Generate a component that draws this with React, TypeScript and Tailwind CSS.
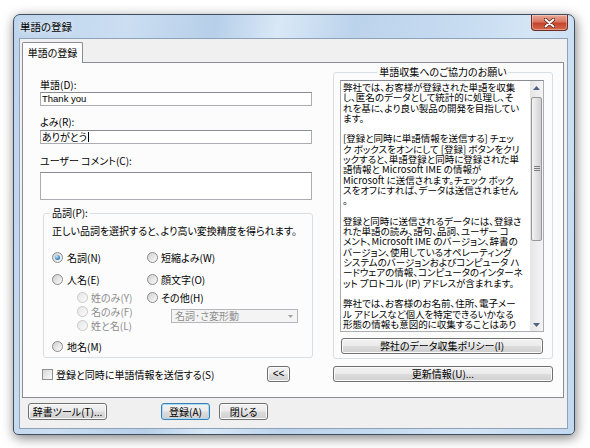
import React from "react";

const btnBase =
  "flex items-center justify-center rounded-[3px] border text-[10px] leading-none text-black bg-[linear-gradient(#f2f2f2_0%,#ebebeb_48%,#dddddd_52%,#cfcfcf_100%)]";

function Btn({
  className,
  children,
  def,
}: {
  className: string;
  children: React.ReactNode;
  def?: boolean;
}) {
  return (
    <div
      className={
        btnBase +
        " " +
        (def
          ? "border-[#3c7fb1] shadow-[inset_0_0_0_1px_#a8dcf7]"
          : "border-[#707070] shadow-[inset_0_0_0_1px_#fbfbfb]") +
        " " +
        className
      }
    >
      {children}
    </div>
  );
}

function Radio({ checked, disabled }: { checked?: boolean; disabled?: boolean }) {
  return (
    <span
      className={
        "flex h-[11px] w-[11px] shrink-0 items-center justify-center rounded-full border " +
        (disabled
          ? "border-[#c9c9c9] bg-[linear-gradient(135deg,#e6e6e6,#fbfbfb)]"
          : "border-[#8b8b8b] bg-[linear-gradient(135deg,#cfcfcf,#fcfcfc)]")
      }
    >
      {checked && (
        <span className="h-[5px] w-[5px] rounded-full bg-[radial-gradient(circle_at_35%_30%,#b9ecff,#2a78b8_70%,#1a5a95)]" />
      )}
    </span>
  );
}

function RadioRow({
  label,
  checked,
  disabled,
  gap = "gap-[4px]",
}: {
  label: string;
  checked?: boolean;
  disabled?: boolean;
  gap?: string;
}) {
  return (
    <div className={"flex h-[12px] items-center " + gap}>
      <Radio checked={checked} disabled={disabled} />
      <span className={"whitespace-nowrap " + (disabled ? "text-[#8d8d8d]" : "text-black")}>{label}</span>
    </div>
  );
}

const lines = [
  "弊社では、お客様が登録された単語を収集",
  "し、匿名のデータとして統計的に処理し、そ",
  "れを基に、より良い製品の開発を目指してい",
  "ます。",
  "",
  "[登録と同時に単語情報を送信する] チェッ",
  "ク ボックスをオンにして [登録] ボタンをクリ",
  "ックすると、単語登録と同時に登録された単",
  "語情報と Microsoft IME の情報が",
  "Microsoft に送信されます。チェック ボック",
  "スをオフにすれば、データは送信されません",
  "。",
  "",
  "登録と同時に送信されるデータには、登録さ",
  "れた単語の読み、語句、品詞、ユーザー コ",
  "メント、Microsoft IME のバージョン、辞書の",
  "バージョン、使用しているオペレーティング",
  "システムのバージョンおよびコンピュータ ハ",
  "ードウェアの情報、コンピュータのインターネ",
  "ット プロトコル (IP) アドレスが含まれます。",
  "",
  "弊社では、お客様のお名前、住所、電子メー",
  "ル アドレスなど個人を特定できるいかなる",
  "形態の情報も意図的に収集することはあり",
];

function Scrollbar() {
  return (
    <div className="flex h-full w-[13px] shrink-0 flex-col bg-[linear-gradient(90deg,#e5e5e5,#f4f4f4)]">
      <div className="flex h-[13px] items-center justify-center">
        <svg width="7" height="4" viewBox="0 0 7 4">
          <path d="M0 4 L3.5 0 L7 4 Z" fill="#4d6185" />
        </svg>
      </div>
      <div className="mx-[1px] mt-[3px] flex h-[144px] items-center justify-center rounded-[2px] border border-[#979797] bg-[linear-gradient(90deg,#f3f3f3,#e2e2e2_50%,#d1d1d1)]">
        <svg width="6" height="6" viewBox="0 0 6 6">
          <path d="M0 0.5 H6 M0 2.5 H6 M0 4.5 H6" stroke="#7a7a7a" strokeWidth="1" />
        </svg>
      </div>
      <div className="flex-1" />
      <div className="flex h-[13px] items-center justify-center">
        <svg width="7" height="4" viewBox="0 0 7 4">
          <path d="M0 0 L3.5 4 L7 0 Z" fill="#4d6185" />
        </svg>
      </div>
    </div>
  );
}

export default function App() {
  return (
    <div className="h-[448px] w-[590px] overflow-hidden bg-white pl-[13px] pt-[14px] font-['Noto_Sans_CJK_JP',sans-serif] text-[10px] text-black [font-feature-settings:'palt']">
      {/* window */}
      <div className="flex h-[421px] w-[562px] flex-col rounded-t-[7px] rounded-b-[5px] border border-[#3f4e61] bg-[linear-gradient(100deg,#bed4ec_0%,#cbdef2_18%,#b7cfe9_32%,#d9e8f6_42%,#bcd3ec_54%,#c6dbf0_70%,#d4e5f5_82%,#c2d8ef_100%)] shadow-[1px_3px_12px_rgba(0,0,0,0.5)]">
        {/* title bar */}
        <div className="flex h-[23px] shrink-0 items-start">
          <div className="ml-[6px] mt-[5px] text-[10.5px] leading-[13px] text-black [text-shadow:0_0_6px_#ffffff]">
            単語の登録
          </div>
          <div className="ml-auto mr-[6px] flex h-[16px] w-[37px] items-center justify-center rounded-b-[4px] border border-t-0 border-[#6d2a22] bg-[linear-gradient(#e9a898_0%,#d9765f_45%,#c4442c_55%,#d6684c_100%)] shadow-[inset_0_0_0_1px_rgba(255,255,255,0.35)]">
            <svg width="11" height="10" viewBox="0 0 11 10">
              <path d="M1.5 1.5 L9.5 8.5 M9.5 1.5 L1.5 8.5" stroke="#5a2015" strokeWidth="3.6" strokeLinecap="round" />
              <path d="M1.5 1.5 L9.5 8.5 M9.5 1.5 L1.5 8.5" stroke="#ffffff" strokeWidth="2" strokeLinecap="round" />
            </svg>
          </div>
        </div>
        {/* client area */}
        <div className="ml-[5px] flex h-[391px] w-[549px] flex-col border border-[#8da2b9] bg-[#f0f0f0]">
          {/* tab control */}
          <div className="ml-[2px] mt-[3px] flex w-[542px] flex-col">
            <div className="relative z-10 -mb-[1px] flex h-[21px] w-[61px] items-center justify-center rounded-t-[2px] border border-b-0 border-[#898c95] bg-[#fcfcfc] pb-[1px]">
              単語の登録
            </div>
            <div className="flex h-[336px] w-[542px] border border-[#898c95] bg-[#fcfcfc]">
              {/* left column */}
              <div className="ml-[17px] flex w-[273px] flex-col">
                <div className="mt-[16px] h-[12px] leading-[12px]">単語(D):</div>
                <div className="mt-[1px] flex h-[14px] w-[272px] items-center border border-[#abadb3] border-t-[#8a8c94] bg-white pl-[1px] font-['Liberation_Sans',sans-serif] text-[9.5px] leading-none">
                  Thank you
                </div>
                <div className="mt-[10px] h-[12px] leading-[12px]">よみ(R):</div>
                <div className="mt-[2px] flex h-[14px] w-[272px] items-center border border-[#abadb3] border-t-[#8a8c94] bg-white pl-[1px] leading-none">
                  ありがとう<span className="ml-[1px] inline-block h-[10px] w-[1px] bg-black" />
                </div>
                <div className="mt-[11px] h-[12px] leading-[12px]">ユーザー コメント(C):</div>
                <div className="mt-[5px] h-[28px] w-[272px] border border-[#abadb3] border-t-[#8a8c94] bg-white" />
                {/* group */}
                <div className="relative ml-[3px] mt-[13px] flex h-[145px] w-[270px] flex-col rounded-[3px] border border-[#d5dfe5] pl-[8px]">
                  <span className="absolute left-[6px] top-[-7px] bg-[#fcfcfc] px-[2px] leading-[12px]">品詞(P):</span>
                  <div className="mt-[11px] h-[12px] whitespace-nowrap leading-[12px]">
                    正しい品詞を選択すると、より高い変換精度を得られます。
                  </div>
                  <div className="flex">
                    <div className="flex w-[95px] flex-col">
                      <div className="mt-[14px]">
                        <RadioRow label="名詞(N)" checked />
                      </div>
                      <div className="mt-[10px]">
                        <RadioRow label="人名(E)" />
                      </div>
                      <div className="ml-[25px] mt-[6px] flex flex-col gap-[2px]">
                        <RadioRow label="姓のみ(Y)" disabled gap="gap-[3px]" />
                        <RadioRow label="名のみ(F)" disabled gap="gap-[3px]" />
                        <RadioRow label="姓と名(L)" disabled gap="gap-[3px]" />
                      </div>
                      <div className="mt-[9px]">
                        <RadioRow label="地名(M)" />
                      </div>
                    </div>
                    <div className="flex flex-col">
                      <div className="mt-[14px]">
                        <RadioRow label="短縮よみ(W)" gap="gap-[3px]" />
                      </div>
                      <div className="mt-[10px]">
                        <RadioRow label="顔文字(O)" gap="gap-[3px]" />
                      </div>
                      <div className="mt-[6px]">
                        <RadioRow label="その他(H)" gap="gap-[3px]" />
                      </div>
                      <div className="ml-[24px] mt-[6px] flex h-[14px] w-[127px] items-center border border-[#b4b8bc] bg-[#f4f4f4] pl-[3px] text-[#8d8d8d] leading-none">
                        名詞･さ変形動
                        <svg className="ml-auto mr-[4px]" width="5" height="3" viewBox="0 0 5 3">
                          <path d="M0 0 L2.5 3 L5 0 Z" fill="#a0a0a0" />
                        </svg>
                      </div>
                    </div>
                  </div>
                </div>
                {/* checkbox row */}
                <div className="mt-[8px] flex h-[16px] w-[273px] items-center">
                  <span className="ml-[2px] h-[11px] w-[11px] border border-[#8e8f8f] bg-[linear-gradient(135deg,#d8d8d8,#fafafa)]" />
                  <span className="ml-[3px] whitespace-nowrap">登録と同時に単語情報を送信する(S)</span>
                  <Btn className="ml-auto mr-[23px] h-[16px] w-[23px] font-['Liberation_Sans',sans-serif] text-[9px]">&lt;&lt;</Btn>
                </div>
              </div>
              {/* right column */}
              <div className="ml-[20px] flex w-[220px] flex-col">
                <div className="relative mt-[9px] flex h-[287px] w-[220px] flex-col rounded-[3px] border border-[#d5dfe5] pl-[6px] pt-[7px]">
                  <span className="absolute left-1/2 top-[-7px] -translate-x-1/2 whitespace-nowrap bg-[#fcfcfc] px-[2px] leading-[12px]">
                    単語収集へのご協力のお願い
                  </span>
                  <div className="flex h-[252px] w-[204px] border border-[#abadb3] border-t-[#8a8c94] bg-white">
                    <div className="flex-1 overflow-hidden pl-[2px] pt-[1px]">
                      {lines.map((l, i) => (
                        <div key={i} className="h-[10.3px] whitespace-nowrap text-[9.5px] leading-[10.3px]">
                          {l}
                        </div>
                      ))}
                    </div>
                    <Scrollbar />
                  </div>
                  <Btn className="ml-[1px] mt-[6px] h-[16px] w-[202px]">弊社のデータ収集ポリシー(I)</Btn>
                </div>
                <Btn className="mt-[7px] h-[16px] w-[220px]">更新情報(U)...</Btn>
              </div>
            </div>
          </div>
          {/* bottom buttons */}
          <div className="ml-[8px] mt-[5px] flex">
            <Btn className="h-[17px] w-[79px]">辞書ツール(T)...</Btn>
            <Btn def className="ml-[54px] h-[17px] w-[49px]">登録(A)</Btn>
            <Btn className="ml-[9px] h-[17px] w-[49px]">閉じる</Btn>
          </div>
        </div>
      </div>
    </div>
  );
}
